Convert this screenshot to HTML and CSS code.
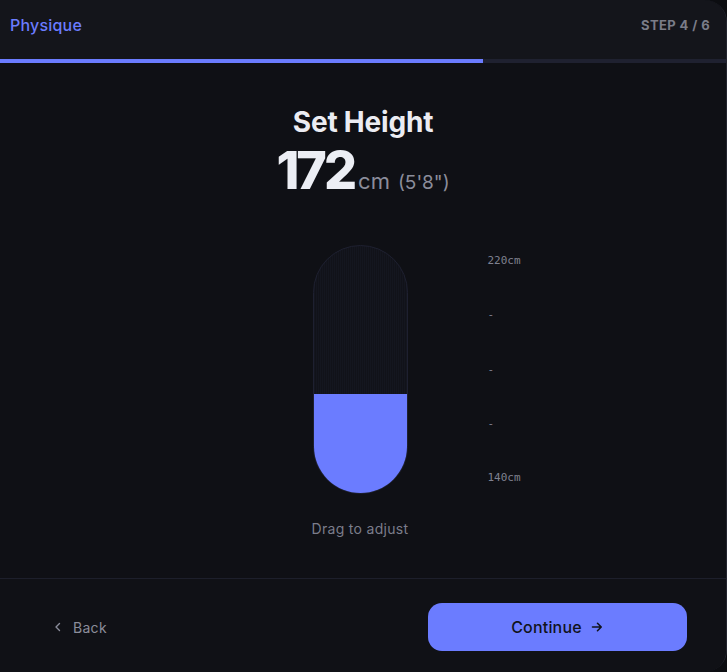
FILE: index.html
```html
<!DOCTYPE html>
<html>
  <head>
    <meta charset="utf-8">
    <title>Physique - Set Height</title>
    <link rel="stylesheet" href="styles.css">
  </head>
  <body>
    <div class="card">
      <header class="topbar">
        <span class="section">Physique</span>
        <span class="step">STEP 4 / 6</span>
      </header>
      <div class="progress"><div class="progress-fill" style="width:66.5%"></div></div>

      <main class="content">
        <h1 class="title">Set Height</h1>
        <div class="reading">
          <span class="value">172</span><span class="unit">cm</span><span class="imperial">(5'8")</span>
        </div>

        <div class="slider">
          <div class="pill">
            <div class="pill-fill" style="height:40%"></div>
          </div>
          <ul class="scale">
            <li>220cm</li>
            <li>-</li>
            <li>-</li>
            <li>-</li>
            <li>140cm</li>
          </ul>
        </div>

        <p class="hint">Drag to adjust</p>
      </main>

      <footer class="actions">
        <a href="#" class="back">
          <svg width="10" height="10" viewBox="0 0 10 10"><path d="M6.5 1.5 3 5l3.5 3.5" fill="none" stroke="currentColor" stroke-width="1.4" stroke-linecap="round" stroke-linejoin="round"/></svg>
          Back
        </a>
        <a href="#" class="continue">
          Continue
          <svg width="14" height="14" viewBox="0 0 14 14"><path d="M2.5 7h8.5M7.5 3.3 11.2 7l-3.7 3.7" fill="none" stroke="currentColor" stroke-width="1.6" stroke-linecap="round" stroke-linejoin="round"/></svg>
        </a>
      </footer>
    </div>
  </body>
</html>
```

FILE: styles.css
```css
html, body{margin:0; padding:0; height:100%; background:#0c0d11;}
body{font-family:"Inter", "Noto Sans", sans-serif; color:#e8e9ef;}

.card{height:100%; box-sizing:border-box; display:flex; flex-direction:column; background:#0f1015; border-radius:0 22px 22px 0; border-right:1px solid #22242e; overflow:hidden;}

.topbar{height:59px; box-sizing:border-box; flex:none; display:flex; align-items:center; justify-content:space-between; padding:0 16px 10px 10px; background:#14151b;}
.section{color:#6b7cff; font-size:16px; font-weight:500; letter-spacing:0.2px;}
.step{color:#7a7c88; font-size:13px; font-weight:700; letter-spacing:0.4px;}

.progress{height:4px; flex:none; background:#1f2130;}
.progress-fill{height:100%; background:#6b7cff;}

.content{flex:1; display:flex; flex-direction:column; align-items:center; padding-top:42px;}
.title{margin:0; font-size:28px; line-height:34px; font-weight:700; color:#ebecf2; letter-spacing:-0.2px;}
.reading{margin-top:4px; height:56px; display:flex; align-items:baseline; line-height:56px;}
.value{font-size:52px; font-weight:800; color:#eceef4; letter-spacing:-3px;}
.unit{font-size:22px; color:#8b8d9b; margin-left:4px;}
.imperial{font-size:19px; color:#8b8d9b; margin-left:8px;}

.slider{margin-top:46px; width:100%; display:grid; grid-template-columns:1fr 95px 1fr; column-gap:80px; margin-left:-6px;}
.pill{grid-column:2; height:249px; border-radius:48px; border:1px solid #1e2030; box-sizing:border-box; overflow:hidden; display:flex; flex-direction:column; justify-content:flex-end;
  background:repeating-linear-gradient(90deg, #14161f 0 1px, #111219 1px 2px);}
.pill-fill{background:#6b7cff;}
.scale{grid-column:3; margin:0; padding:10px 0; list-style:none; display:flex; flex-direction:column; justify-content:space-between;
  font-family:"DejaVu Sans Mono", monospace; font-size:11px; line-height:12px; color:#7f8190;}

.hint{margin:25px 0 0 -6px; font-size:14px; line-height:20px; color:#7b7d8b; letter-spacing:0.3px;}

.actions{height:94px; box-sizing:border-box; flex:none; border-top:1px solid #1d1f2b; background:#101116; display:flex; align-items:center; justify-content:space-between; padding:3px 39px 0;}
.back{display:flex; align-items:center; gap:10px; padding:0 14px; color:#8b8d9b; font-size:14px; letter-spacing:0.3px; text-decoration:none;}
.continue{width:259px; height:48px; display:flex; align-items:center; justify-content:center; gap:8px; background:#6b7cff; color:#11131c; font-size:16px; font-weight:500; letter-spacing:0.2px; text-decoration:none; border-radius:14px;}
```
